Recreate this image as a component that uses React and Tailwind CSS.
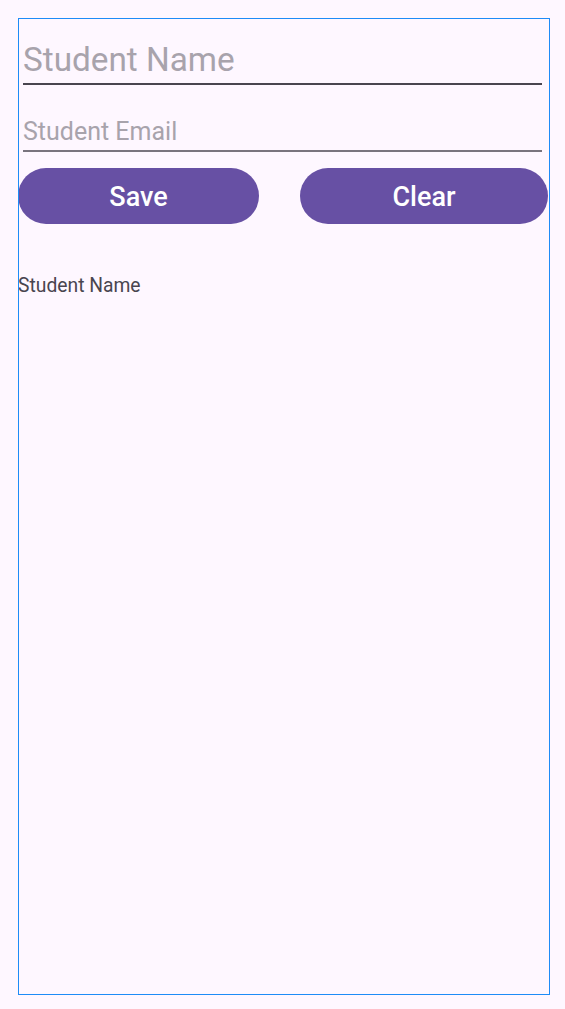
import React, { useState } from 'react';

const App = () => {
  const [name, setName] = useState('');
  const [email, setEmail] = useState('');

  return (
    <div
      className="min-h-screen w-full bg-[#fef7ff] pt-[18px] pl-[18px]"
      style={{ fontFamily: 'Roboto, "Noto Sans", sans-serif' }}
    >
      <div className="w-[532px] h-[977px] outline outline-1 -outline-offset-1 outline-[#1e8cf7] flex flex-col">
        {/* name field */}
        <div className="ml-[5px] w-[519px] mt-[22px] pb-[3px] border-b-2 border-[#49454f]">
          <input
            value={name}
            onChange={(e) => setName(e.target.value)}
            placeholder="Student Name"
            className="block w-full bg-transparent outline-none text-[33.3px] leading-[40px] text-[#1d1b20] placeholder-[#a8a3ac]"
          />
        </div>

        {/* email field */}
        <div className="ml-[5px] w-[519px] mt-[32px] pb-[3px] border-b-2 border-[#79747e]">
          <input
            value={email}
            onChange={(e) => setEmail(e.target.value)}
            placeholder="Student Email"
            className="block w-full bg-transparent outline-none text-[25px] leading-[30px] text-[#1d1b20] placeholder-[#a8a3ac]"
          />
        </div>

        <div className="flex justify-between mt-[16px] mr-[2px]">
          <button className="w-[241px] h-[56px] pt-[2px] rounded-full bg-[#6750a4] text-white text-[27px] font-medium flex items-center justify-center">
            Save
          </button>
          <button
            onClick={() => {
              setName('');
              setEmail('');
            }}
            className="w-[248px] h-[56px] pt-[2px] rounded-full bg-[#6750a4] text-white text-[27px] font-medium flex items-center justify-center"
          >
            Clear
          </button>
        </div>

        <p className="mt-[51px] text-[19.3px] leading-[22px] text-[#49454f]">Student Name</p>
      </div>
    </div>
  );
};

export default App;
